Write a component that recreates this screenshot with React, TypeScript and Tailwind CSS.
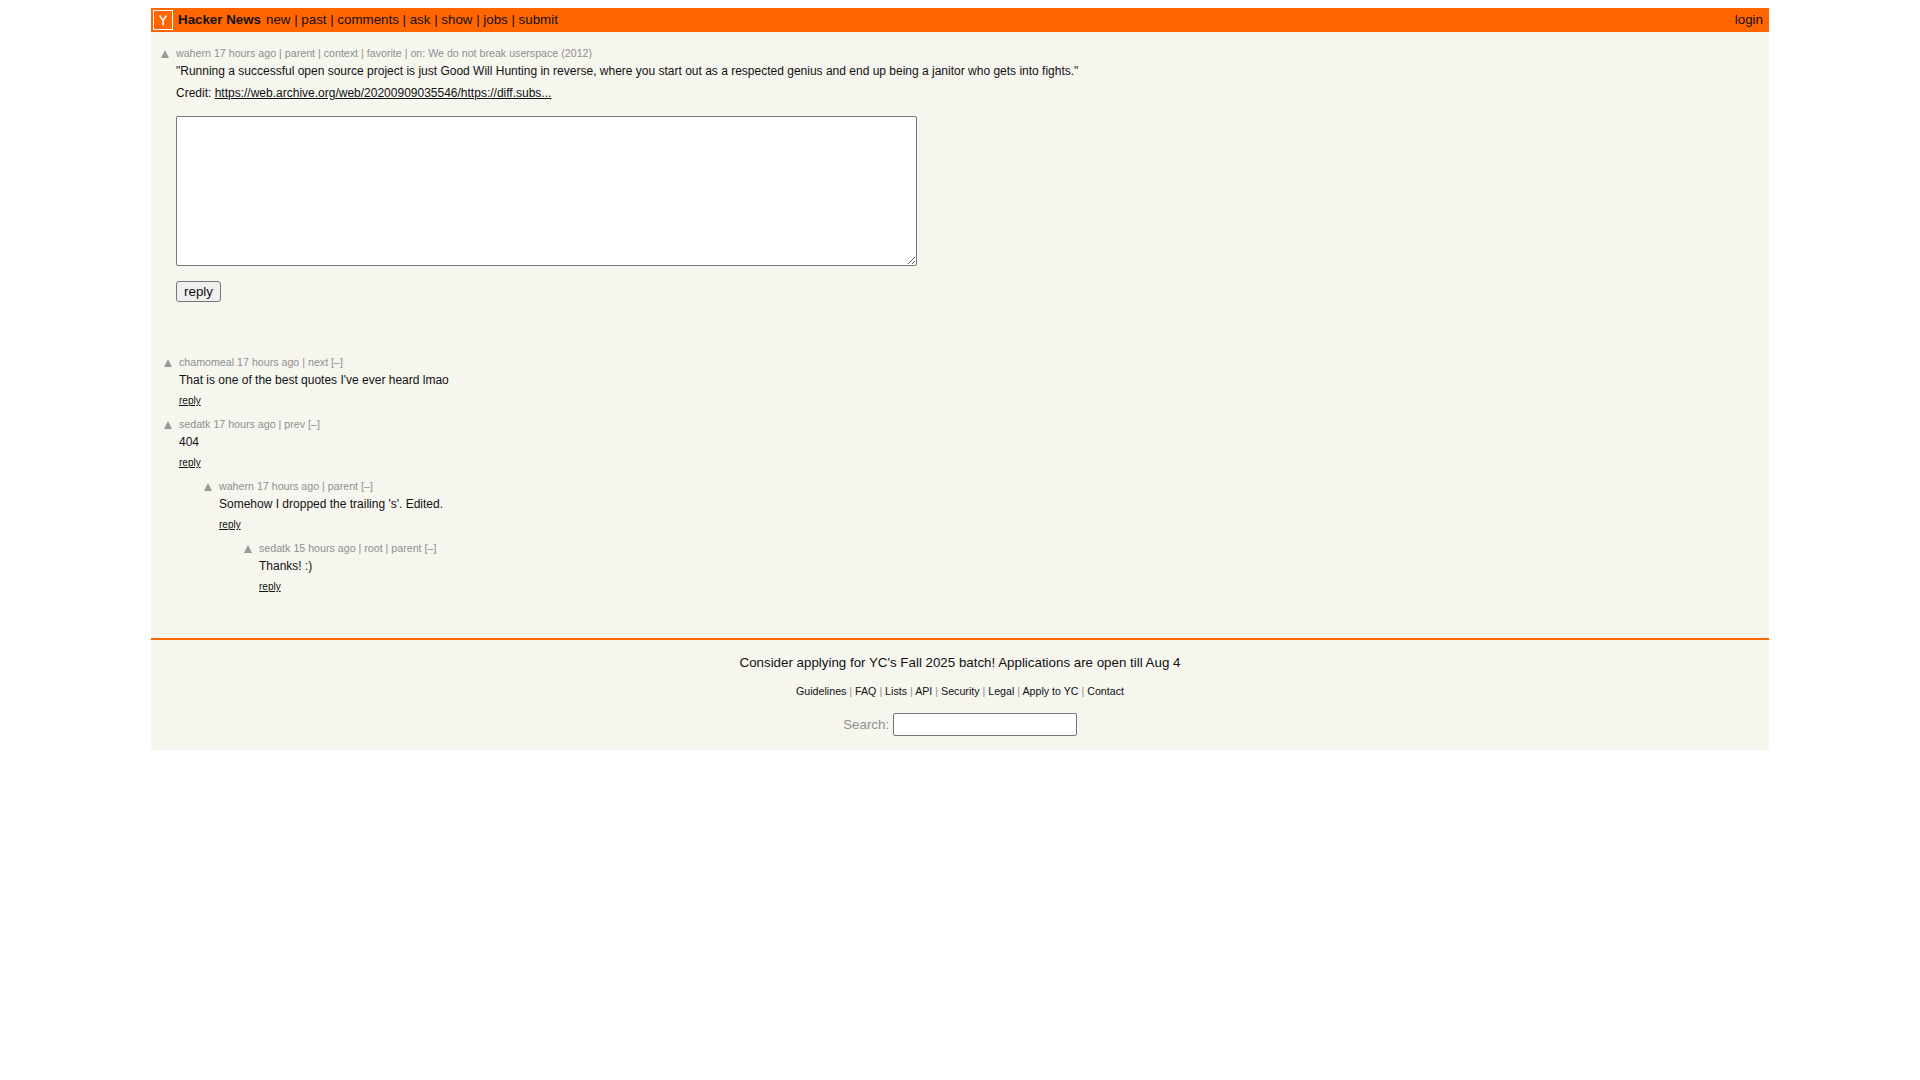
import React from "react";

const Arrow = () => (
  <svg width="8" height="8" viewBox="0 0 8 8" className="block"><polygon points="4,0 8,8 0,8" fill="#999999" /></svg>
);

function Comment({ indent, user, time, nav, text }: { indent: number; user: string; time: string; nav: string; text: string }) {
  return (
    <div className="flex" style={{ paddingLeft: indent }}>
      <div className="w-[8px] pt-[4px] mr-[7px] shrink-0"><Arrow /></div>
      <div>
        <div className="text-[10.67px] leading-[14px] text-[#8f8f8f]">{user} {time} | {nav} [–]</div>
        <div className="text-[12px] leading-[14px] text-[#111111] mt-[4px]">{text}</div>
        <div className="text-[10px] leading-[12px] text-[#111111] underline mt-[8px] mb-[10px]">reply</div>
      </div>
    </div>
  );
}

const Sep = () => <span className="text-[#8f8f8f]">|</span>;

export default function App() {
  return (
    <div className="font-['Liberation_Sans',Arial,sans-serif] px-[151px] pt-[8px]">
      <div className="bg-[#f6f6ef]">
        <div className="bg-[#ff6600] h-[24px] flex items-center pl-[2px] pr-[6px] text-[13.33px] text-[#111111]">
          <div className="w-[20px] h-[20px] border border-white flex items-center justify-center mr-[5px]">
            <svg width="8" height="11" viewBox="0 0 8 11" className="block"><path d="M0.6 0.5 L4 5.6 L7.4 0.5 M4 5.6 L4 10.5" fill="none" stroke="#ffffff" strokeWidth="1.5" /></svg>
          </div>
          <span className="font-bold mr-[5px]">Hacker News</span>
          <span>new | past | comments | ask | show | jobs | submit</span>
          <span className="ml-auto">login</span>
        </div>
        <div className="pt-[14px] pl-[25px] relative">
          <div className="absolute left-[10px] top-[18px]"><Arrow /></div>
          <div className="text-[10.67px] leading-[14px] text-[#8f8f8f]">wahern 17 hours ago | parent | context | favorite | on: We do not break userspace (2012)</div>
          <div className="text-[12px] leading-[14px] text-[#111111] mt-[4px]">"Running a successful open source project is just Good Will Hunting in reverse, where you start out as a respected genius and end up being a janitor who gets into fights."</div>
          <div className="text-[12px] leading-[14px] text-[#111111] mt-[8px]">Credit: <span className="underline">https://web.archive.org/web/20200909035546/https://diff.subs...</span></div>
          <textarea className="block mt-[16px] w-[741px] h-[150px] bg-white border border-[#767676] rounded-[2px]" />
          <button className="block mt-[15px] w-[45px] h-[21px] bg-[#efefef] border border-[#767676] rounded-[3px] text-[13.33px] leading-[15px] text-[#111111]">reply</button>
        </div>
        <div className="pt-[53px] pl-[13px]">
          <Comment indent={0} user="chamomeal" time="17 hours ago" nav="next" text="That is one of the best quotes I've ever heard lmao" />
          <Comment indent={0} user="sedatk" time="17 hours ago" nav="prev" text="404" />
          <Comment indent={40} user="wahern" time="17 hours ago" nav="parent" text="Somehow I dropped the trailing 's'. Edited." />
          <Comment indent={80} user="sedatk" time="15 hours ago" nav="root | parent" text="Thanks! :)" />
        </div>
        <div className="mt-[35px] border-t-2 border-[#ff6600] pt-[15px] pb-[14px] flex flex-col items-center">
          <div className="text-[13.33px] leading-[15px] text-[#111111]">Consider applying for YC's Fall 2025 batch! Applications are open till Aug 4</div>
          <div className="text-[10.67px] leading-[13px] text-[#111111] mt-[15px]">Guidelines <Sep /> FAQ <Sep /> Lists <Sep /> API <Sep /> Security <Sep /> Legal <Sep /> Apply to YC <Sep /> Contact</div>
          <div className="flex items-center mt-[15px] text-[13.33px] text-[#8f8f8f]">Search:&nbsp;<input className="w-[184px] h-[23px] bg-white border border-[#767676] rounded-[2px]" /></div>
        </div>
      </div>
    </div>
  );
}
